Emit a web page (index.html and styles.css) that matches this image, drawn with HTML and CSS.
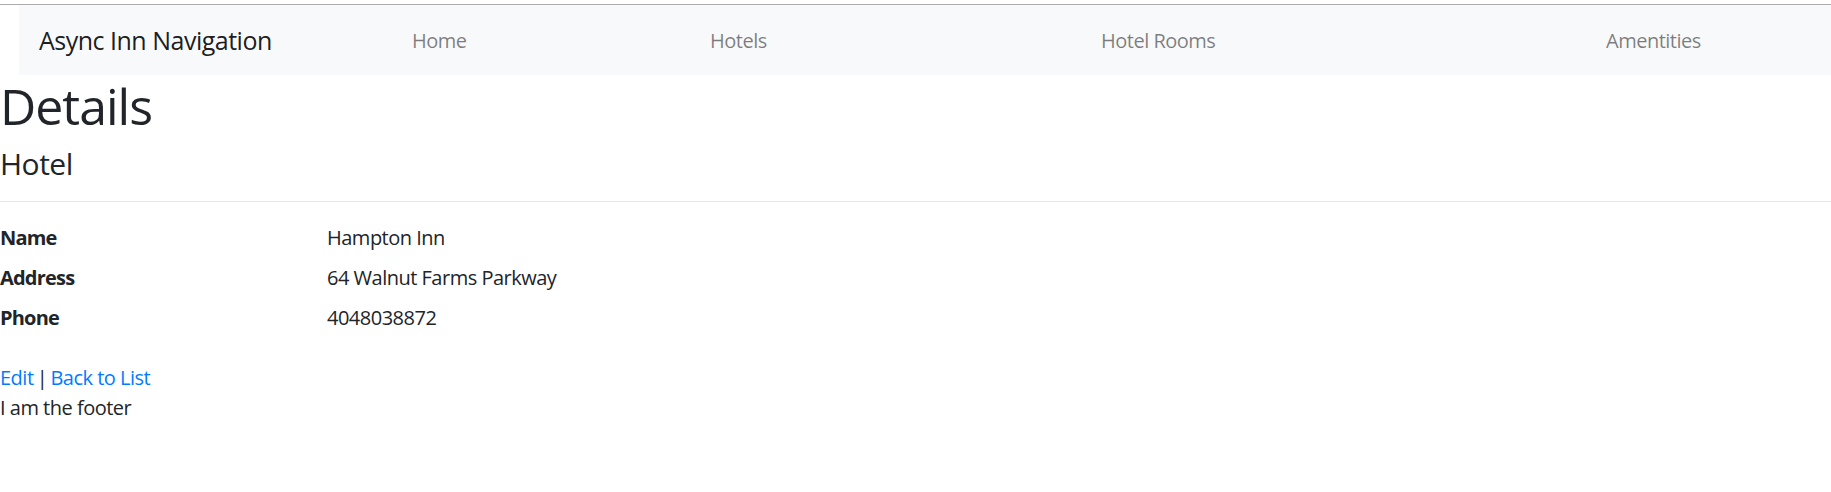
FILE: index.html
```html
<!DOCTYPE html>
<html lang="en">
<head>
<meta charset="utf-8">
<title>Details - Async Inn</title>
<link rel="stylesheet" href="styles.css">
</head>
<body>
<header class="site-header">
  <nav class="navbar">
    <a class="brand" href="#">Async Inn Navigation</a>
    <a class="nav-link" href="#">Home</a>
    <a class="nav-link" href="#">Hotels</a>
    <a class="nav-link" href="#">Hotel Rooms</a>
    <a class="nav-link" href="#">Amentities</a>
  </nav>
</header>
<main class="content">
  <h1 class="title">Details</h1>
  <div>
    <h4 class="subtitle">Hotel</h4>
    <hr class="divider">
    <dl class="details">
      <dt>Name</dt>
      <dd>Hampton Inn</dd>
      <dt>Address</dt>
      <dd>64 Walnut Farms Parkway</dd>
      <dt>Phone</dt>
      <dd>4048038872</dd>
    </dl>
  </div>
  <div class="actions">
    <a href="#">Edit</a><span class="sep"> | </span><a href="#">Back to List</a>
  </div>
</main>
<footer class="site-footer">I am the footer</footer>
</body>
</html>
```
FILE: styles.css
```css
html, body {
  margin: 0;
  padding: 0;
}

body {
  padding-top: 4px;
  font-family: "Open Sans", "Noto Sans", "Liberation Sans", sans-serif;
  font-size: 20px;
  line-height: 1.5;
  letter-spacing: -0.5px;
  color: #212529;
  background: #ffffff;
}

.site-header {
  border-top: 1px solid #ababab;
}

.navbar {
  margin-left: 19px;
  background: #f8f9fa;
  padding: 10px 0 10px 20px;
  display: grid;
  grid-template-columns: 373px 298px 391px 505px 1fr;
  align-items: center;
}

.brand {
  font-size: 25px;
  line-height: 37.5px;
  padding: 7px 0 5.5px;
  color: rgba(0, 0, 0, 0.9);
  text-decoration: none;
  white-space: nowrap;
}

.nav-link {
  padding: 11px 0 9px;
  line-height: 30px;
  color: rgba(0, 0, 0, 0.5);
  text-decoration: none;
  white-space: nowrap;
}

.content {
  padding-top: 1px;
}

.title {
  margin: 0 0 10px;
  font-size: 50px;
  font-weight: 500;
  letter-spacing: -1px;
  line-height: 1.2;
}

.subtitle {
  margin: 0 0 10px;
  font-size: 30px;
  font-weight: 500;
  letter-spacing: -0.5px;
  line-height: 1.2;
}

.divider {
  margin: 19px 0 20px;
  border: 0;
  border-top: 1px solid rgba(0, 0, 0, 0.1);
}

.details {
  display: grid;
  grid-template-columns: 327px 1fr;
  margin: 0 0 20px;
  padding-top: 1px;
}

.details dt {
  font-weight: 700;
  letter-spacing: -0.8px;
  margin: 0;
}

.details dd {
  margin: 0 0 10px;
}

.actions .sep {
  word-spacing: -1.5px;
}

.actions a {
  color: #007bff;
  text-decoration: none;
}
```
